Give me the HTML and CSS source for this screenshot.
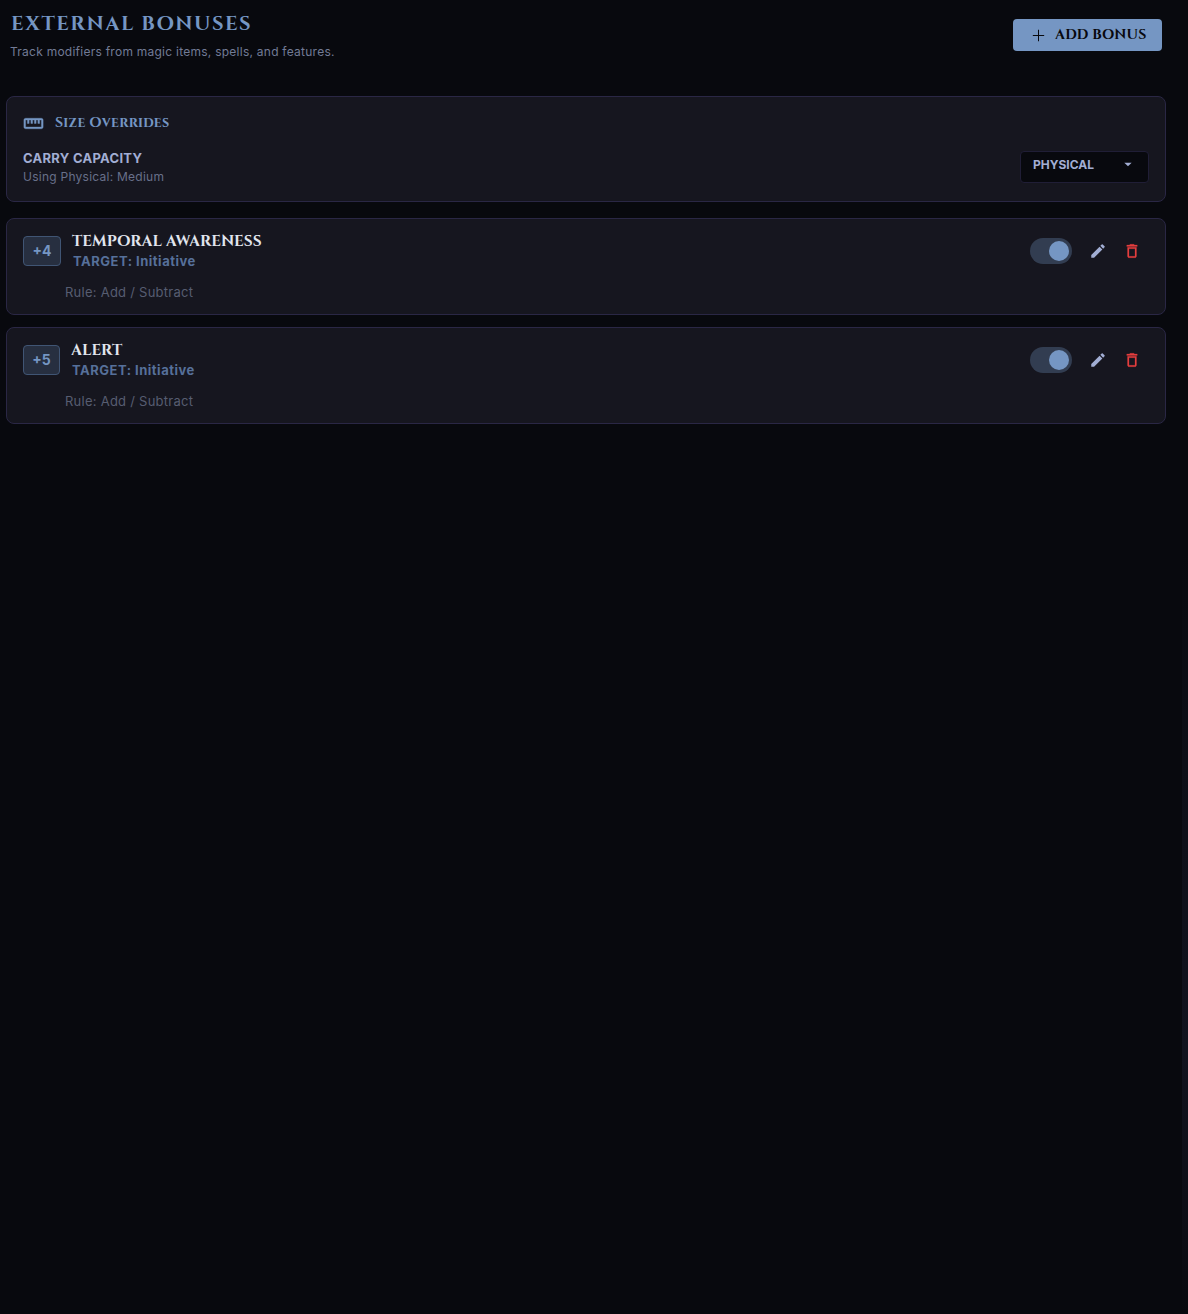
FILE: index.html
```
<!DOCTYPE html>
<html lang="en">
<head>
<meta charset="utf-8">
<title>External Bonuses</title>
<link rel="stylesheet" href="styles.css">
</head>
<body>
<main class="page">
  <header class="header">
    <div>
      <h1 class="title">EXTERNAL BONUSES</h1>
      <p class="subtitle">Track modifiers from magic items, spells, and features.</p>
    </div>
    <button class="add"><svg class="add-icon" viewBox="0 0 24 24"><path d="M20 12.700h-7.300V20h-1.400v-7.300H4v-1.400h7.300V4h1.400v7.300H20z"/></svg><span>ADD BONUS</span></button>
  </header>

  <section class="card overrides">
    <h2 class="section-title"><svg class="ruler" viewBox="0 0 24 24"><path d="M21 6H3c-1.100 0-2 .9-2 2v8c0 1.100.9 2 2 2h18c1.100 0 2-.9 2-2V8c0-1.100-.9-2-2-2zm0 10H3V8h2v4h2V8h2v4h2V8h2v4h2V8h2v4h2V8h2v8z"/></svg><span>Size Overrides</span></h2>
    <div class="setting">
      <div>
        <div class="setting-name">CARRY CAPACITY</div>
        <div class="setting-hint">Using Physical: Medium</div>
      </div>
      <div class="select"><span>PHYSICAL</span><svg class="caret" viewBox="0 0 24 24"><path d="M6.500 10l5.500 5.500 5.500-5.500z"/></svg></div>
    </div>
  </section>

  <section class="card bonus">
    <div class="bonus-row">
      <div class="badge">+4</div>
      <div class="bonus-text">
        <h3 class="name">TEMPORAL AWARENESS</h3>
        <div class="target">TARGET: Initiative</div>
      </div>
      <div class="switch"><span class="thumb"></span></div>
      <svg class="action edit" viewBox="0 0 24 24"><path d="M3 17.250V21h3.750L17.810 9.940l-3.750-3.750L3 17.250zM20.710 7.040a1 1 0 0 0 0-1.410l-2.340-2.340a1 1 0 0 0-1.410 0l-1.830 1.830 3.750 3.750 1.830-1.830z"/></svg>
      <svg class="action delete" viewBox="0 0 24 24"><path d="M6 19c0 1.100.9 2 2 2h8c1.100 0 2-.9 2-2V7H6v12zM8 9h8v10H8V9zm7.500-5l-1-1h-5l-1 1H5v2h14V4z"/></svg>
    </div>
    <div class="rule">Rule: Add / Subtract</div>
  </section>

  <section class="card bonus">
    <div class="bonus-row">
      <div class="badge badge-narrow">+5</div>
      <div class="bonus-text">
        <h3 class="name">ALERT</h3>
        <div class="target">TARGET: Initiative</div>
      </div>
      <div class="switch"><span class="thumb"></span></div>
      <svg class="action edit" viewBox="0 0 24 24"><path d="M3 17.250V21h3.750L17.810 9.940l-3.750-3.750L3 17.250zM20.710 7.040a1 1 0 0 0 0-1.410l-2.340-2.340a1 1 0 0 0-1.410 0l-1.830 1.830 3.750 3.750 1.830-1.830z"/></svg>
      <svg class="action delete" viewBox="0 0 24 24"><path d="M6 19c0 1.100.9 2 2 2h8c1.100 0 2-.9 2-2V7H6v12zM8 9h8v10H8V9zm7.500-5l-1-1h-5l-1 1H5v2h14V4z"/></svg>
    </div>
    <div class="rule">Rule: Add / Subtract</div>
  </section>
</main>
<aside class="edge"></aside>
</body>
</html>
```
FILE: styles.css
```
* { box-sizing: border-box; }
body {
  margin: 0;
  display: flex;
  justify-content: space-between;
  height: 1314px;
  overflow: hidden;
  background: #08090e;
  font-family: Inter, sans-serif;
}
h1, h2, h3, p { margin: 0; }
svg { display: block; flex: none; fill: currentColor; }

.page { width: 1166px; padding-left: 6px; }
.edge {
  width: 6px;
  background: linear-gradient(#08090e 42%, #0d0f17 58%, #11131e 80%, #0c0d14 94%, #08090e);
}

.header {
  display: flex;
  justify-content: space-between;
  height: 96px;
  padding: 12px 4px 0 4px;
}
.title {
  padding-left: 1px;
  font: 700 20px/24px Cinzel, "Liberation Serif", serif;
  letter-spacing: 1.5px;
  color: #7596c3;
  white-space: nowrap;
}
.subtitle {
  margin-top: 7px;
  font-size: 12px;
  line-height: 18px;
  letter-spacing: 0.25px;
  color: #727b96;
}
.add {
  display: flex;
  align-items: center;
  width: 149px;
  height: 32px;
  margin-top: 7px;
  padding: 0 0 0 17px;
  border: 0;
  border-radius: 4px;
  background: #7596c3;
  color: #08090e;
  font: 600 14px/20px Cinzel, "Liberation Serif", serif;
  letter-spacing: 0.2px;
  white-space: nowrap;
}
.add-icon { width: 17px; height: 17px; margin-right: 8px; }

.card {
  border: 1px solid #2a2745;
  border-radius: 8px;
  background: #16161f;
}
.overrides { height: 106px; padding: 16px; margin-bottom: 16px; }
.section-title {
  display: flex;
  align-items: center;
  gap: 11px;
  height: 20px;
  font: 700 14px/20px Cinzel, "Liberation Serif", serif;
  letter-spacing: 0.25px;
  color: #7596c3;
}
.ruler { width: 21px; height: 21px; stroke: currentColor; stroke-width: 0.4px; }
.setting { display: flex; justify-content: space-between; margin-top: 18px; }
.setting-name { font-size: 13px; line-height: 15px; font-weight: 700; letter-spacing: 0.28px; color: #a2aed4; }
.setting-hint { margin-top: 2px; font-size: 12px; line-height: 18px; letter-spacing: 0.25px; color: #68708a; }
.select {
  display: flex;
  justify-content: space-between;
  width: 129px;
  height: 32px;
  padding: 6px 12px;
  border: 1px solid #201e36;
  border-radius: 4px;
  background: #08090e;
  color: #a2aed4;
  font-size: 12px;
  line-height: 14px;
  font-weight: 700;
}
.caret { width: 16px; height: 16px; margin-top: -2px; }

.bonus { height: 97px; padding: 11px 24px 0 16px; margin-bottom: 12px; }
.bonus-row { display: flex; height: 42px; align-items: center; }
.badge {
  width: 38px;
  height: 30px;
  margin-right: 11px;
  border: 1px solid #405574;
  border-radius: 4px;
  background: #272f40;
  color: #7596c3;
  font-size: 14px;
  line-height: 28px;
  font-weight: 700;
  text-align: center;
}
.badge-narrow { width: 37px; }
.bonus-text { flex: 1; height: 42px; }
.name {
  padding-top: 1px;
  font: 700 15.400px/21px Cinzel, "Liberation Serif", serif;
  color: #e1e5ee;
  white-space: nowrap;
}
.target { padding-left: 1px; font-size: 13px; line-height: 19px; font-weight: 700; letter-spacing: 0.5px; color: #56709a; }
.switch {
  display: flex;
  justify-content: flex-end;
  align-items: center;
  width: 42px;
  height: 26px;
  padding-right: 3px;
  border-radius: 13px;
  background: #323d51;
}
.thumb { width: 20px; height: 20px; border-radius: 50%; background: #7596c3; }
.action { width: 18px; height: 18px; }
.edit { margin-left: 17px; color: #a2aed4; }
.delete { margin-left: 16px; color: #e53e3e; stroke: currentColor; stroke-width: 0.3px; }
.rule { margin: 10px 0 0 42px; font-size: 13px; line-height: 20px; letter-spacing: 0.25px; color: #575d71; }
```
